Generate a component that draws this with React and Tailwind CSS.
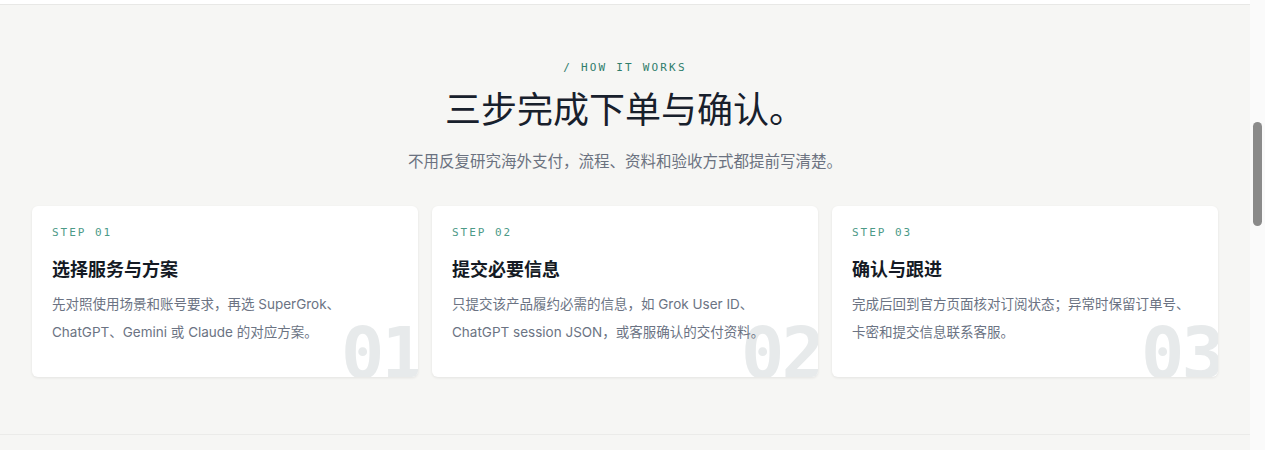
const steps = [
  {
    label: 'STEP 01',
    num: '01',
    title: '选择服务与方案',
    desc: '先对照使用场景和账号要求，再选 SuperGrok、ChatGPT、Gemini 或 Claude 的对应方案。',
  },
  {
    label: 'STEP 02',
    num: '02',
    title: '提交必要信息',
    desc: '只提交该产品履约必需的信息，如 Grok User ID、ChatGPT session JSON，或客服确认的交付资料。',
  },
  {
    label: 'STEP 03',
    num: '03',
    title: '确认与跟进',
    desc: '完成后回到官方页面核对订阅状态；异常时保留订单号、卡密和提交信息联系客服。',
  },
]

const sans = 'font-["Inter","Noto_Sans_CJK_SC",sans-serif]'
const mono = 'font-["DejaVu_Sans_Mono","Liberation_Mono",monospace]'

function StepCard({ step }) {
  return (
    <div className="relative h-[171px] overflow-hidden rounded-md bg-white px-5 pt-[19px] shadow-[0_1px_3px_rgba(0,0,0,0.08)]">
      {/* faded step number in the corner */}
      <span
        className={`pointer-events-none absolute -right-[4px] -bottom-[12px] text-[72px] leading-none font-bold tracking-[-0.04em] text-[#e7eaeb] ${mono}`}
      >
        {step.num}
      </span>
      <div className="relative">
        <p className={`text-[11px] leading-4 tracking-[0.18em] text-[#4c9a88] ${mono}`}>{step.label}</p>
        <h3 className="mt-4 text-[18px] leading-[26px] font-bold text-[#141a24]">{step.title}</h3>
        <p className="mt-[7px] text-[13.5px] leading-7 text-[#6b7383]">{step.desc}</p>
      </div>
    </div>
  )
}

export default function App() {
  return (
    <div className={`flex h-[450px] w-full overflow-hidden bg-[#f6f6f4] ${sans}`}>
      <div className="flex flex-1 flex-col">
        <div className="h-[5px] border-b border-[#e8e8e6] bg-white" />

        <section className="border-b border-[#ebebe9] px-8 pt-[55px] pb-[57px]">
          <div className="text-center">
            <p className={`text-[11px] leading-4 tracking-[0.2em] text-[#2f7d6b] ${mono}`}>/ HOW IT WORKS</p>
            <h2 className="mt-3 text-[36px] leading-[44px] font-normal text-[#18202c]">三步完成下单与确认。</h2>
            <p className="mt-[18px] text-[15.5px] leading-6 text-[#6b7280]">
              不用反复研究海外支付，流程、资料和验收方式都提前写清楚。
            </p>
          </div>

          <div className="mt-8 grid grid-cols-3 gap-3.5">
            {steps.map(s => (
              <StepCard key={s.num} step={s} />
            ))}
          </div>
        </section>
      </div>

      {/* scrollbar */}
      <div className="w-[15px] bg-[#fafafa] pt-[122px]">
        <div className="ml-[3px] h-[104px] w-[9px] rounded-full bg-[#8b8b8b]" />
      </div>
    </div>
  )
}
